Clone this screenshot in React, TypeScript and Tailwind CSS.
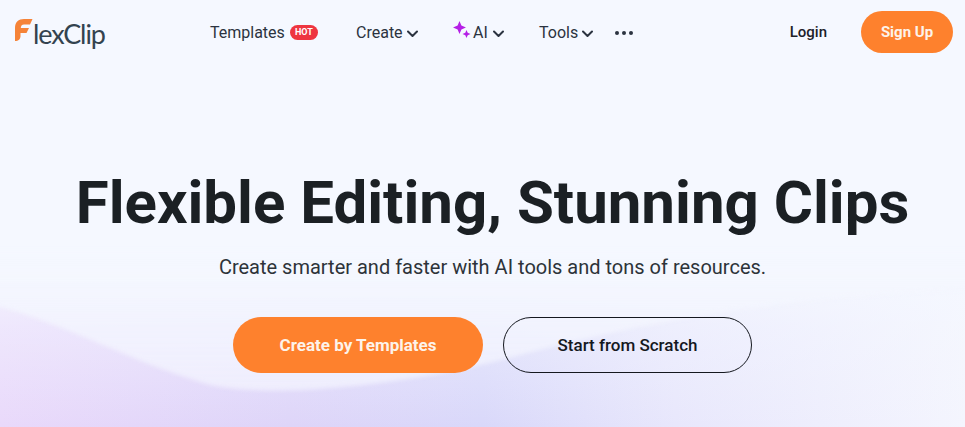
import { useId } from "react";

const Chevron = () => (
  <svg width="11" height="8" viewBox="0 0 11 8" fill="none" className="mt-[3px]">
    <path d="M1 1.5 5.500 6 10 1.500" stroke="#2b3340" strokeWidth="2" strokeLinecap="round" strokeLinejoin="round" />
  </svg>
);

const Sparkle = () => (
  <svg width="19" height="18" viewBox="0 0 19 18" fill="#b51fe6">
    <path d="M6.500 0 8.400 4.600 13 6.500 8.400 8.400 6.500 13 4.600 8.400 0 6.500 4.600 4.600Z" />
    <path d="M13.500 9 14.700 11.800 17.500 13 14.700 14.200 13.500 17 12.300 14.200 9.500 13 12.300 11.800Z" />
  </svg>
);

const Logo = () => (
  <div className="flex items-start">
    <svg width="19" height="24" viewBox="0 0 19 24" className="mt-[3px]">
      <path
        d="M1 23V10C1 4 4.500 1 10 1H18.500L16 6.500H10C8 6.500 7 7.500 6.800 10H15L12.500 15H6.500V18C6.500 21 4.500 23 1 23Z"
        fill="#f58338"
      />
    </svg>
    <span className="mt-[3px] font-['Lato',sans-serif] text-[27px] leading-[32px] tracking-[-1.1px] text-[#33434f]">
      lexClip
    </span>
  </div>
);

const Backdrop = () => {
  const id = useId();
  return (
    <svg
      className="absolute inset-0 h-full w-full"
      viewBox="0 0 965 427"
      preserveAspectRatio="none"
      aria-hidden="true"
    >
      <defs>
        <linearGradient id={`${id}-wave`} x1="0" y1="0" x2="1" y2="0">
          <stop offset="0" stopColor="#e9d9fb" />
          <stop offset="0.3" stopColor="#ded5f9" />
          <stop offset="0.5" stopColor="#d9d8fa" />
          <stop offset="0.7" stopColor="#e8e7fc" />
          <stop offset="1" stopColor="#f4f5fe" />
        </linearGradient>
        <linearGradient id={`${id}-fade`} x1="0" y1="0" x2="0" y2="1">
          <stop offset="0" stopColor="#f5f8ff" stopOpacity="1" />
          <stop offset="0.4" stopColor="#f5f8ff" stopOpacity="0.45" />
          <stop offset="1" stopColor="#f5f8ff" stopOpacity="0" />
        </linearGradient>
        <linearGradient id={`${id}-top`} x1="0" y1="0" x2="0" y2="1">
          <stop offset="0" stopColor="#f5f8ff" stopOpacity="1" />
          <stop offset="0.5" stopColor="#f3f5fe" stopOpacity="0.85" />
          <stop offset="1" stopColor="#f2f2fe" stopOpacity="0.8" />
        </linearGradient>
      </defs>
      <rect x="0" y="260" width="965" height="167" fill={`url(#${id}-wave)`} />
      <rect x="0" y="260" width="965" height="167" fill={`url(#${id}-fade)`} />
      <path
        className="blur-[2px]"
        d="M-10 304C70 325 130 362 210 385C270 398 400 388 520 355C650 320 800 295 975 290V250H-10Z"
        fill={`url(#${id}-top)`}
      />
    </svg>
  );
};

export default function App() {
  return (
    <div className="relative h-[427px] w-[965px] overflow-hidden bg-[#f5f8ff] font-['Roboto',sans-serif]">
      <Backdrop />

      <div className="relative flex h-[427px] flex-col">
        {/* nav */}
        <header className="flex h-[64px] items-center pl-[14px] pr-[12px]">
          <div className="w-[196px]">
            <Logo />
          </div>
          <nav className="mt-[1px] flex items-center text-[16px] text-[#2b3340]">
            <div className="flex w-[146px] items-center">
              <span>Templates</span>
              <span className="ml-[5px] flex h-[15px] w-[28px] items-center justify-center rounded-full bg-[#ee3540] text-[9px] font-bold text-white">
                HOT
              </span>
            </div>
            <div className="flex w-[97px] items-center gap-[4px]">
              <span>Create</span>
              <Chevron />
            </div>
            <div className="flex w-[86px] items-center gap-[5px]">
              <div className="flex items-center">
                <span className="-mt-[6px]">
                  <Sparkle />
                </span>
                <span className="ml-[1px]">AI</span>
              </div>
              <Chevron />
            </div>
            <div className="flex w-[76px] items-center gap-[4px]">
              <span>Tools</span>
              <Chevron />
            </div>
            <div className="flex items-center gap-[3px]">
              <span className="h-[4px] w-[4px] rounded-full bg-[#2b3340]" />
              <span className="h-[4px] w-[4px] rounded-full bg-[#2b3340]" />
              <span className="h-[4px] w-[4px] rounded-full bg-[#2b3340]" />
            </div>
          </nav>
          <div className="ml-auto flex items-center gap-[34px]">
            <span className="text-[15px] font-medium text-[#1c2129]">Login</span>
            <button className="h-[42px] w-[92px] rounded-full bg-[#fe812d] text-[15px] font-bold text-[#fdf3ea]">
              Sign Up
            </button>
          </div>
        </header>

        {/* hero */}
        <main className="flex flex-col items-center pl-[20px]">
          <h1 className="mt-[104px] text-[60px] leading-[70px] font-bold text-[#1b2024]">
            Flexible Editing, Stunning Clips
          </h1>
          <p className="mt-[15px] text-[20px] leading-[28px] text-[#2d3339]">
            Create smarter and faster with AI tools and tons of resources.
          </p>
          <div className="mt-[36px] flex gap-[20px]">
            <button className="h-[56px] w-[250px] rounded-full bg-[#fe812d] pt-[1px] text-[17px] font-bold text-[#fdf3ea]">
              Create by Templates
            </button>
            <button className="h-[56px] w-[249px] rounded-full border border-[#15181f] pt-[1px] text-[17px] font-medium text-[#15181f]">
              Start from Scratch
            </button>
          </div>
        </main>
      </div>
    </div>
  );
}
